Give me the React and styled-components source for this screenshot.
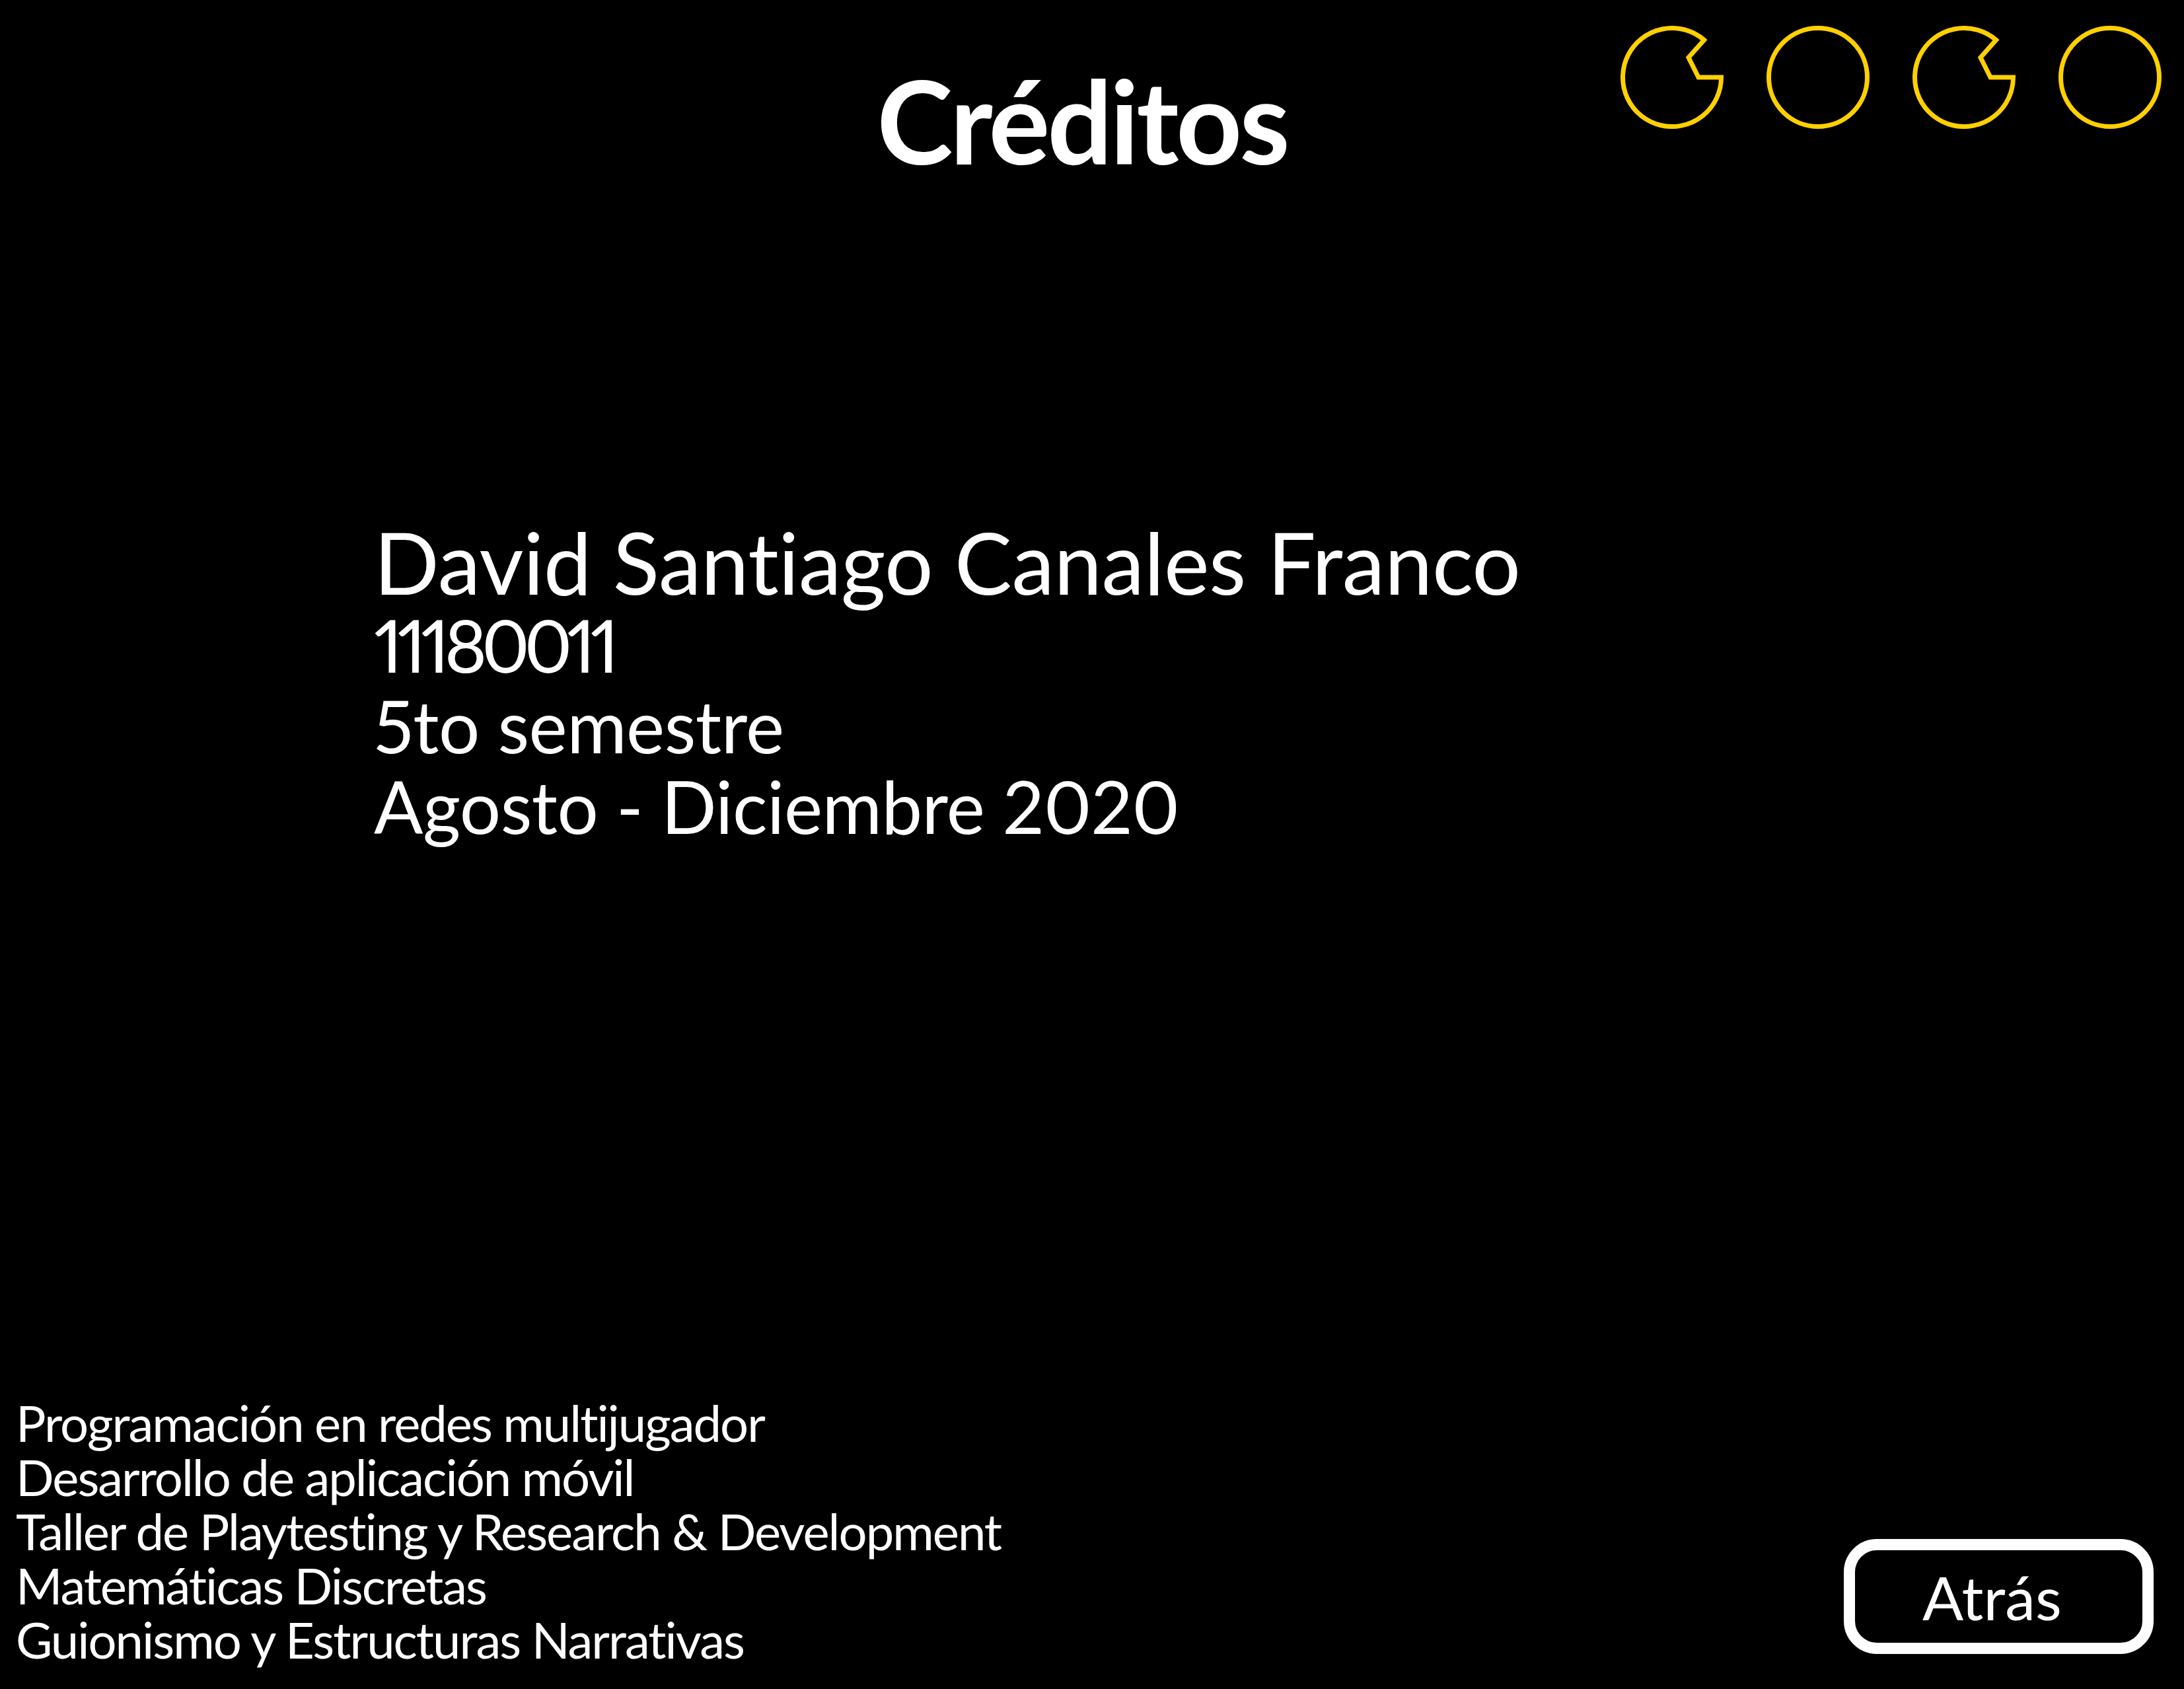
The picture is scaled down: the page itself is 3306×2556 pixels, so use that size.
import React from "react";
import styled, { createGlobalStyle } from "styled-components";

const GlobalStyle = createGlobalStyle`
  html, body {
    margin: 0;
    padding: 0;
    background: #000;
  }
  body {
    font-family: "Lato", "Open Sans", sans-serif;
    color: #fff;
  }
`;

const Page = styled.div`
  width: 3306px;
  height: 2556px;
  box-sizing: border-box;
  background: #000;
  display: flex;
  flex-direction: column;
  overflow: hidden;
`;

const Header = styled.header`
  display: grid;
  grid-template-columns: 1fr auto 1fr;
  align-items: start;
`;

const Title = styled.h1`
  grid-column: 2;
  margin: 79px 30px 0 0;
  font-size: 174px;
  font-weight: 700;
  line-height: 206px;
  letter-spacing: -4px;
`;

const Lives = styled.div`
  grid-column: 3;
  justify-self: end;
  display: flex;
  gap: 65px;
  padding: 39px 34px 0 0;
`;

const Info = styled.section`
  margin-top: 501px;
  padding-left: 566px;
  display: flex;
  flex-direction: column;
`;

const InfoLine = styled.div`
  font-size: ${(p) => (p.$big ? "130px" : "110px")};
  line-height: ${(p) => (p.$big ? "128px" : "122px")};
  letter-spacing: ${(p) => (p.$tight ? "-8px" : "-0.5px")};
  font-variant-numeric: proportional-nums;
  white-space: nowrap;
`;

const Footer = styled.footer`
  margin-top: auto;
  display: flex;
  justify-content: space-between;
  align-items: flex-end;
  padding: 0 46px 34px 24px;
`;

const Courses = styled.ul`
  list-style: none;
  margin: 0;
  padding: 0;
`;

const Course = styled.li`
  font-size: 76px;
  line-height: 82px;
  letter-spacing: -2px;
  white-space: nowrap;
`;

const BackButton = styled.button`
  width: 469px;
  height: 174px;
  margin-bottom: 19px;
  box-sizing: border-box;
  border: 17px solid #fff;
  border-radius: 50px;
  background: #000;
  color: #fff;
  font-family: "Lato", "Open Sans", sans-serif;
  font-size: 92px;
  display: flex;
  align-items: center;
  justify-content: center;
  padding: 0 20px 0 0;
  cursor: pointer;
`;

const Life = ({ bitten }) => (
  <svg width="156" height="156" viewBox="-78 -78 156 156">
    {bitten ? (
      <path
        d="M 74.5 0 A 74.5 74.5 0 1 1 48.5 -56.5 L 25 -30 L 40 0 Z"
        fill="none"
        stroke="#ffd000"
        strokeWidth="7"
        strokeLinejoin="miter"
      />
    ) : (
      <circle r="74.5" fill="none" stroke="#ffd000" strokeWidth="7" />
    )}
  </svg>
);

const courses = [
  "Programación en redes multijugador",
  "Desarrollo de aplicación móvil",
  "Taller de Playtesting y Research & Development",
  "Matemáticas Discretas",
  "Guionismo y Estructuras Narrativas",
];

export default function App() {
  return (
    <Page>
      <GlobalStyle />
      <Header>
        <Title>Créditos</Title>
        <Lives>
          <Life bitten />
          <Life />
          <Life bitten />
          <Life />
        </Lives>
      </Header>

      <Info>
        <InfoLine $big>David Santiago Canales Franco</InfoLine>
        <InfoLine $tight>11180011</InfoLine>
        <InfoLine>5to semestre</InfoLine>
        <InfoLine>Agosto - Diciembre 2020</InfoLine>
      </Info>

      <Footer>
        <Courses>
          {courses.map((c) => (
            <Course key={c}>{c}</Course>
          ))}
        </Courses>
        <BackButton>Atrás</BackButton>
      </Footer>
    </Page>
  );
}
